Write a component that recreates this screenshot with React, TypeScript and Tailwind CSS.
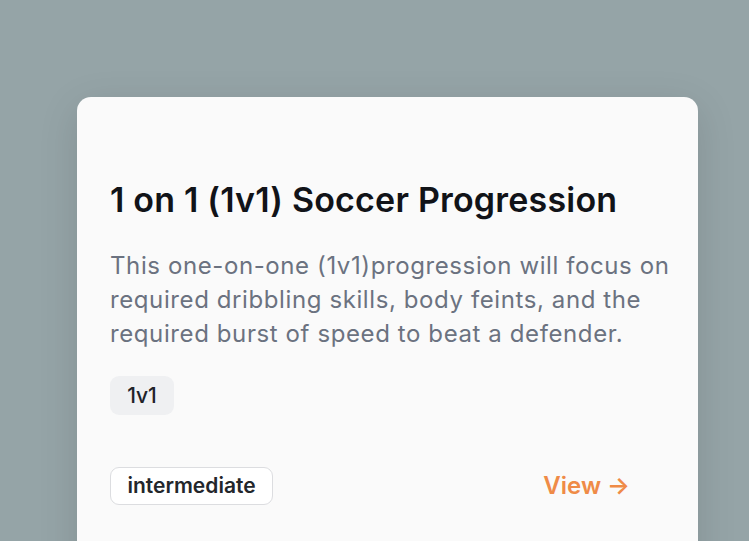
export default function App() {
  return (
    <div className="w-[749px] h-[541px] overflow-hidden bg-[#95a4a7] pt-[97px] pl-[77px]" style={{ fontFamily: "Inter, 'Noto Sans', sans-serif" }}>
      <div className="w-[621px] h-[520px] bg-[#fafafa] rounded-[14px] shadow-[0_10px_40px_rgba(0,0,0,0.12)] px-[33px] pt-[82px]">
        <h1 className="text-[34px] leading-[42px] font-semibold text-[#111318] tracking-[0.2px]">1 on 1 (1v1) Soccer Progression</h1>
        <p className="mt-[28px] text-[24px] leading-[34px] text-[#6b7280] tracking-[0.6px] w-[580px]">This one-on-one (1v1)progression will focus on required dribbling skills, body feints, and the required burst of speed to beat a defender.</p>
        <div className="mt-[25px] flex">
          <span className="h-[39px] w-[64px] justify-center flex items-center rounded-[9px] bg-[#eff0f2] text-[21px] font-medium text-[#1f2329]">1v1</span>
        </div>
        <div className="mt-[52px] flex items-center justify-between w-[520px]">
          <span className="h-[38px] w-[163px] justify-center flex items-center rounded-[9px] bg-white border border-[#dcdde0] text-[21px] font-semibold text-[#23262b]">intermediate</span>
          <span className="text-[24px] font-semibold text-[#ef8b47]">View →</span>
        </div>
      </div>
    </div>
  );
}
